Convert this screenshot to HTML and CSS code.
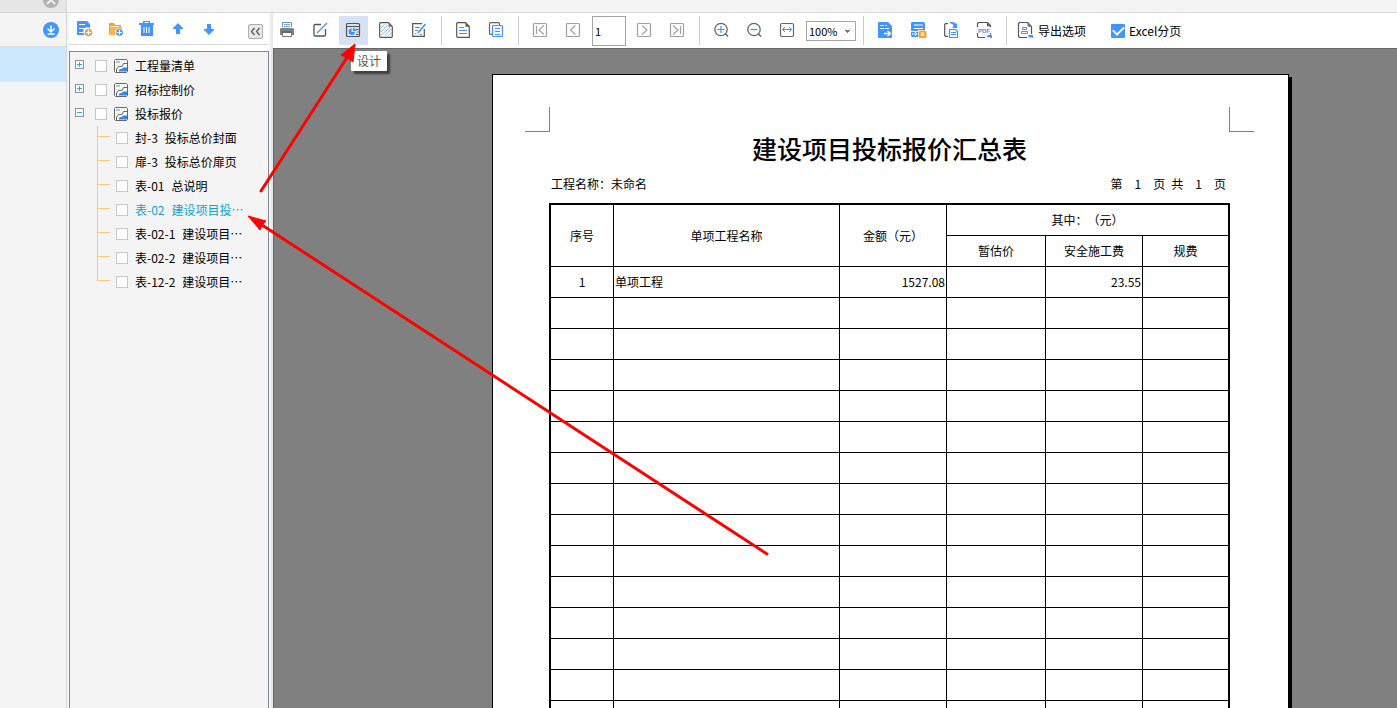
FILE: index.html
```html
<!DOCTYPE html>
<html lang="zh-CN">
<head>
<meta charset="utf-8">
<title>报表预览</title>
<link rel="stylesheet" href="styles.css">
</head>
<body>
<svg class="defs" width="0" height="0" aria-hidden="true">
  <symbol id="report" viewBox="0 0 14 14"><path d="M1.500 .5h11l1 1v11l-1 1h-11l-1-1v-11z" fill="#fafafa" stroke="#666"/><path d="M2 2h4v2H2z" fill="#9cc8fa"/><path d="M13.500 4.500h-4l-1.500 3H4.500L2.500 10v3" fill="none" stroke="#666"/><path d="M5 12.500V11l1-1h2l1-1.500h4v4z" fill="#2f87f5"/></symbol>
</svg>
<div class="app">
  <header class="tabs">
    <div class="tab">
      <button class="plain" aria-label="关闭"><svg width="16" height="8" viewBox="0 8 16 8"><circle cx="8" cy="8" r="8" fill="#b3b3b3"/><path d="M4 4l8 8M12 4l-8 8" stroke="#fff" stroke-width="1.6"/></svg></button>
    </div>
  </header>
  <aside class="side">
    <div class="side-head">
      <button class="plain" aria-label="下载"><svg width="16" height="16" viewBox="0 0 16 16"><circle cx="8" cy="8" r="8" fill="#4196fb"/><path d="M8 3.500v6M4.500 6.500L8 10l3.500-3.500M4.500 12h7" stroke="#fff" stroke-width="1.500" fill="none"/></svg></button>
    </div>
    <div class="side-selected"></div>
  </aside>
  <section class="reports">
    <div class="tree-tools">
      <button class="tool" aria-label="新建报表"><svg width="17" height="17" viewBox="0 0 17 17"><path d="M2 1h9l3 3v4a4 4 0 0 0-5 7H2a1 1 0 0 1-1-1V2a1 1 0 0 1 1-1z" fill="#4196fb"/><path d="M3 4.500h6M3 8.500h7M3 12.500h4" stroke="#fff"/><circle cx="12.500" cy="12.500" r="3.800" fill="#f9a02b"/><path d="M12.500 10v5M10 12.500h5" stroke="#fff" stroke-width="1.200"/></svg></button>
      <button class="tool" aria-label="新建文件夹"><svg width="17" height="17" viewBox="0 0 17 17"><path d="M2 3h5l1 2h6v3a4.500 4.500 0 0 0-5 7H2z" fill="#f9a02b"/><path d="M4 7h11v2h-5l-2 2v4H2z" fill="#ffb545"/><path d="M3 6.500h9" stroke="#fff" stroke-width=".8"/><circle cx="12.500" cy="12.500" r="3.800" fill="#4196fb" stroke="#fff" stroke-width=".6"/><path d="M12.500 10v5M10 12.500h5" stroke="#fff" stroke-width="1.200"/></svg></button>
      <button class="tool" aria-label="删除"><svg width="17" height="17" viewBox="0 0 17 17"><path d="M5 1h7v2h4v2h-1v11H3V5H1V3h4z" fill="#4196fb"/><path d="M6.500 2.500h4" stroke="#fff"/><path d="M6 7v6M8.500 7v6M11 7v6" stroke="#fff"/></svg></button>
      <button class="tool" aria-label="上移"><svg width="17" height="17" viewBox="0 0 17 17"><path d="M9 3l5 5v1h-3v5H7V9H4V8z" fill="#4196fb"/></svg></button>
      <button class="tool" aria-label="下移"><svg width="17" height="17" viewBox="0 0 17 17"><path d="M9 15l5-5V9h-3V4H7v5H4v1z" fill="#4196fb"/></svg></button>
      <button class="collapse" aria-label="收起"><svg width="11" height="9" viewBox="0 0 11 9"><path d="M4.500 1L1.500 4.500l3 3.500M9.500 1l-3 3.500 3 3.500" fill="none" stroke="#555" stroke-width="1.200"/></svg></button>
    </div>
    <ul class="tree">
      <li class="row"><button class="twisty" aria-label="展开"><svg width="9" height="9"><path d="M2 4.500h5M4.500 2v5" stroke="#28b0e0"/></svg></button><label class="node"><input type="checkbox" class="box"><svg width="14" height="14"><use href="#report"/></svg><span>工程量清单</span></label></li>
      <li class="row"><button class="twisty" aria-label="展开"><svg width="9" height="9"><path d="M2 4.500h5M4.500 2v5" stroke="#28b0e0"/></svg></button><label class="node"><input type="checkbox" class="box"><svg width="14" height="14"><use href="#report"/></svg><span>招标控制价</span></label></li>
      <li><div class="row"><button class="twisty" aria-label="折叠"><svg width="9" height="9"><path d="M2 4.500h5" stroke="#28b0e0"/></svg></button><label class="node"><input type="checkbox" class="box"><svg width="14" height="14"><use href="#report"/></svg><span>投标报价</span></label></div>
        <ul class="children">
          <li><label class="leaf"><input type="checkbox" class="box"><span>封-3</span><span>投标总价封面</span></label></li>
          <li><label class="leaf"><input type="checkbox" class="box"><span>扉-3</span><span>投标总价扉页</span></label></li>
          <li><label class="leaf"><input type="checkbox" class="box"><span>表-01</span><span>总说明</span></label></li>
          <li class="current"><label class="leaf"><input type="checkbox" class="box"><span>表-02</span><span>建设项目投⋯</span></label></li>
          <li><label class="leaf"><input type="checkbox" class="box"><span>表-02-1</span><span>建设项目⋯</span></label></li>
          <li><label class="leaf"><input type="checkbox" class="box"><span>表-02-2</span><span>建设项目⋯</span></label></li>
          <li><label class="leaf"><input type="checkbox" class="box"><span>表-12-2</span><span>建设项目⋯</span></label></li>
        </ul>
      </li>
    </ul>
  </section>
  <main class="viewer">
    <div class="tools">
      <button class="tool" aria-label="打印"><svg width="17" height="17" viewBox="0 0 17 17"><path d="M3.500 5V.5h9V5" fill="#fff" stroke="#8b8b8b"/><path d="M5 2.500h6M5 4.500h6" stroke="#6aacf7"/><path d="M2 6h12l1 1v6H1V7z" fill="#808080"/><path d="M3.500 10.500h9v4h-9z" fill="#fff" stroke="#777"/><path d="M3 10h10" stroke="#555"/></svg></button>
      <button class="tool" aria-label="编辑"><svg width="17" height="17" viewBox="0 0 17 17"><path d="M9 2.500H3a1 1 0 0 0-1 1V13a1 1 0 0 0 1 1h9.500a1 1 0 0 0 1-1V7" fill="none" stroke="#555" stroke-width="1.300"/><path d="M5 11l10-10" stroke="#3d94f6" stroke-width="1.300"/></svg></button>
      <button class="tool active" aria-label="设计"><svg width="17" height="17" viewBox="0 0 17 17"><rect x="1.500" y="1.500" width="13" height="13" rx="1" fill="none" stroke="#555" stroke-width="1.200"/><path d="M2 4.500h12" stroke="#555"/><path d="M6.500 6.500a3.200 3.200 0 1 0 3.500 3.500H6.500z" fill="#3d94f6"/><path d="M8 6a3 3 0 0 1 3 3H8z" fill="#3d94f6"/><path d="M11 7.500h2.500M12 10h1.500M11 12.500h2.500" stroke="#555"/></svg></button>
      <button class="tool" aria-label="背景"><svg width="17" height="17" viewBox="0 0 17 17"><path d="M10.500 .7H2.700a1 1 0 0 0-1 1v12.600a1 1 0 0 0 1 1h10.600a1 1 0 0 0 1-1V4.500z" fill="none" stroke="#555" stroke-width="1.200"/><path d="M10.500 .7v4h4z" fill="#777"/><path d="M3 6l3.500-3.500M3 10l6.500-7M3 13.500l9-8.500M7 13.500l6-6.500M10.500 13.500l3-3" stroke="#6aacf7" stroke-width=".9"/></svg></button>
      <button class="tool" aria-label="批注"><svg width="17" height="17" viewBox="0 0 17 17"><path d="M11 1.700H1.700v12.600h11.600V7" fill="none" stroke="#555" stroke-width="1.200"/><path d="M7 11l7.500-9" stroke="#3d94f6" stroke-width="1.600"/><path d="M4 5.500h5M4 8.500h3M4 11.500h1.500M9 12.500h2" stroke="#3d94f6"/></svg></button>
      <span class="sep"></span>
      <button class="tool" aria-label="单页"><svg width="17" height="17" viewBox="0 0 17 17"><path d="M10.500 .7H2.700a1 1 0 0 0-1 1v12.600a1 1 0 0 0 1 1h11.600V4.500z" fill="none" stroke="#555" stroke-width="1.200"/><path d="M10.500 .7v4h4z" fill="#555"/><path d="M4 5.500h5M4 8.500h8M4 11.500h8" stroke="#3d94f6"/></svg></button>
      <button class="tool" aria-label="多页"><svg width="17" height="17" viewBox="0 0 17 17"><path d="M11.500 3V1.700a1 1 0 0 0-1-1h-8a1 1 0 0 0-1 1v9.600a1 1 0 0 0 1 1H4" fill="none" stroke="#666" stroke-width="1.200"/><rect x="4.500" y="3.500" width="10" height="11" rx="1" fill="#fff" stroke="#3d94f6" stroke-width="1.200"/><path d="M7 6.500h5M7 9.500h5M7 12.500h5" stroke="#3d94f6"/></svg></button>
      <span class="sep"></span>
      <button class="tool" aria-label="首页"><svg width="17" height="17" viewBox="0 0 17 17"><rect x="1.500" y="1.500" width="13" height="13" rx="1" fill="none" stroke="#a0a0a0" stroke-width="1.200"/><path d="M4.500 4v8M12 3.500L7 8l5 4.500" fill="none" stroke="#a0a0a0" stroke-width="1.200"/></svg></button>
      <button class="tool" aria-label="上一页"><svg width="17" height="17" viewBox="0 0 17 17"><rect x="1.500" y="1.500" width="13" height="13" rx="1" fill="none" stroke="#a0a0a0" stroke-width="1.200"/><path d="M10.500 3.500L5.500 8l5 4.500" fill="none" stroke="#a0a0a0" stroke-width="1.200"/></svg></button>
      <input class="page-no" type="text" value="1" aria-label="页码">
      <button class="tool" aria-label="下一页"><svg width="17" height="17" viewBox="0 0 17 17"><rect x="1.500" y="1.500" width="13" height="13" rx="1" fill="none" stroke="#a0a0a0" stroke-width="1.200"/><path d="M6 3.500L11 8l-5 4.500" fill="none" stroke="#a0a0a0" stroke-width="1.200"/></svg></button>
      <button class="tool" aria-label="末页"><svg width="17" height="17" viewBox="0 0 17 17"><rect x="1.500" y="1.500" width="13" height="13" rx="1" fill="none" stroke="#a0a0a0" stroke-width="1.200"/><path d="M11.500 4v8M4 3.500L9 8l-5 4.500" fill="none" stroke="#a0a0a0" stroke-width="1.200"/></svg></button>
      <span class="sep"></span>
      <button class="tool" aria-label="放大"><svg width="17" height="17" viewBox="0 0 17 17"><circle cx="8" cy="7.500" r="6.200" fill="none" stroke="#666" stroke-width="1.300"/><path d="M12 11.500l3 3" stroke="#666" stroke-width="1.600"/><path d="M4.500 7.500h7M8 4v7" stroke="#3d94f6" stroke-width="1.200"/></svg></button>
      <button class="tool" aria-label="缩小"><svg width="17" height="17" viewBox="0 0 17 17"><circle cx="8" cy="7.500" r="6.200" fill="none" stroke="#666" stroke-width="1.300"/><path d="M12 11.500l3 3" stroke="#666" stroke-width="1.600"/><path d="M4.500 7.500h7" stroke="#3d94f6" stroke-width="1.200"/></svg></button>
      <button class="tool" aria-label="适合宽度"><svg width="17" height="17" viewBox="0 0 17 17"><rect x="1.500" y="1.500" width="13" height="13" rx="1.500" fill="none" stroke="#666" stroke-width="1.200"/><path d="M3.500 7.500h9M6 5L3.500 7.500 6 10M10 5l2.500 2.500L10 10" fill="none" stroke="#3d94f6"/></svg></button>
      <select class="zoom" aria-label="缩放"><option>100%</option></select>
      <span class="sep"></span>
      <button class="tool" aria-label="导出"><svg width="17" height="17" viewBox="0 0 17 17"><path d="M2 0h9l4 4v12H2a1 1 0 0 1-1-1V1a1 1 0 0 1 1-1z" fill="#4196fb"/><path d="M3 3.500h4M8 3.500h2M3 6.500h4M8 6.500h4" fill="none" stroke="#fff"/><path d="M7 11.500h6M10.500 9l3 2.500-3 2.500" fill="none" stroke="#fff" stroke-width="1.500"/></svg></button>
      <button class="tool" aria-label="导出Excel"><svg width="17" height="17" viewBox="0 0 17 17"><path d="M2 0h12l1 1v7H8v7H2l-1-1V1z" fill="#4196fb"/><path d="M4 3h9M4 6.500h9M1 9.500h7" stroke="#fff"/><path d="M2 12h5M5 10l2 2-2 2" stroke="#fff" fill="none"/><rect x="8.500" y="8.500" width="8" height="7.500" rx="1.500" fill="#f9a02b"/><path d="M11 10.500l3 3.500M14 10.500L11 14" stroke="#fff" stroke-width="1.200"/></svg></button>
      <button class="tool" aria-label="批量导出"><svg width="17" height="17" viewBox="0 0 17 17"><path d="M5 1.700H2.500l-.8.800v11l.8.800H5" fill="none" stroke="#555" stroke-width="1.200"/><path d="M7 0c3 0 5 0 6 2l1-1v5H9l1.500-1.500C10 2 9 1.500 7 1.500z" fill="#4196fb"/><path d="M6.500 7.500h6l2 2v6h-8z" fill="#fff" stroke="#4196fb" stroke-width="1.200"/><path d="M8 10.500h5M8 12.500h5" stroke="#4196fb"/></svg></button>
      <button class="tool" aria-label="导出PDF"><svg width="17" height="17" viewBox="0 0 17 17"><path d="M1.500 14.500V1.500l1-1h9l3 3v9M1.500 14.500l1 1H9" fill="none" stroke="#555" stroke-width="1.200"/><path d="M11 .7v3.500h3.500z" fill="#555"/><path d="M1 5h15v6H1z" fill="#fff"/><text x="2" y="10.500" class="pdf">PDF</text><path d="M10 14.500l2-.5-1-1h5v3z" fill="#3d94f6"/></svg></button>
      <span class="sep"></span>
      <button class="options"><svg width="17" height="17" viewBox="0 0 17 17"><path d="M10.500 .5h-8l-1 1v13l1 1H10M14.500 12V4.500l-4-4" fill="none" stroke="#555" stroke-width="1.200"/><path d="M10.500 .7v4h4z" fill="#777"/><path d="M5.500 5.500h4v2h-4zM4.500 9.500h6v2h-6z" fill="none" stroke="#3d94f6"/><path d="M10 14.500l2-.5-1-1h5v3z" fill="#3d94f6"/></svg><span>导出选项</span></button>
      <label class="paging"><input type="checkbox" class="tick" checked><span>Excel分页</span></label>
    </div>
    <div class="canvas">
      <article class="sheet">
        <div class="crops"><span class="crop crop-left"></span><span class="crop crop-right"></span></div>
        <h1>建设项目投标报价汇总表</h1>
        <div class="info">
          <span>工程名称：未命名</span>
          <span class="pages"><span class="count"><span>第</span><span>1</span><span>页</span></span><span class="count"><span>共</span><span>1</span><span>页</span></span></span>
        </div>
        <table class="summary">
          <colgroup><col class="c-no"><col class="c-name"><col class="c-sum"><col class="c-est"><col class="c-safe"><col></colgroup>
          <thead>
            <tr><th rowspan="2">序号</th><th rowspan="2">单项工程名称</th><th rowspan="2">金额（元）</th><th colspan="3">其中：（元）</th></tr>
            <tr><th>暂估价</th><th>安全施工费</th><th>规费</th></tr>
          </thead>
          <tbody>
            <tr><td class="mid">1</td><td>单项工程</td><td class="num">1527.08</td><td></td><td class="num">23.55</td><td></td></tr>
            <tr><td></td><td></td><td></td><td></td><td></td><td></td></tr>
            <tr><td></td><td></td><td></td><td></td><td></td><td></td></tr>
            <tr><td></td><td></td><td></td><td></td><td></td><td></td></tr>
            <tr><td></td><td></td><td></td><td></td><td></td><td></td></tr>
            <tr><td></td><td></td><td></td><td></td><td></td><td></td></tr>
            <tr><td></td><td></td><td></td><td></td><td></td><td></td></tr>
            <tr><td></td><td></td><td></td><td></td><td></td><td></td></tr>
            <tr><td></td><td></td><td></td><td></td><td></td><td></td></tr>
            <tr><td></td><td></td><td></td><td></td><td></td><td></td></tr>
            <tr><td></td><td></td><td></td><td></td><td></td><td></td></tr>
            <tr><td></td><td></td><td></td><td></td><td></td><td></td></tr>
            <tr><td></td><td></td><td></td><td></td><td></td><td></td></tr>
            <tr><td></td><td></td><td></td><td></td><td></td><td></td></tr>
            <tr><td></td><td></td><td></td><td></td><td></td><td></td></tr>
            <tr><td></td><td></td><td></td><td></td><td></td><td></td></tr>
          </tbody>
        </table>
      </article>
    </div>
  </main>
  <div class="tooltip" role="tooltip">设计</div>
  <svg class="arrows" width="780" height="570" viewBox="0 0 780 570" aria-hidden="true">
    <path d="M261 191L348 56M767 554L262 225" stroke="#f00" stroke-width="3" stroke-linecap="round"/>
    <path d="M355 44l-14 11 6 3 6 4zM248 216l18 5-4 4-2 5z" fill="#f00" stroke="#f00"/>
  </svg>
</div>
</body>
</html>
```

FILE: styles.css
```css
* { box-sizing: border-box; }

body {
  margin: 0;
  font: 12px/20px "Noto Sans CJK SC", sans-serif;
  text-spacing-trim: space-all;
  color: #000;
  background: #f4f4f4;
}

button, input, select { font: inherit; color: inherit; margin: 0; }
button { padding: 0; border: 0; background: none; }
svg { display: block; flex: none; }
ul { list-style: none; margin: 0; padding: 0; }
.defs { position: absolute; }
.pdf { font: bold 6px "Liberation Sans", sans-serif; fill: #3d94f6; }

.app {
  position: relative;
  display: grid;
  grid-template-columns: 67px 202px 1fr;
  grid-template-rows: 13px minmax(0, 1fr);
  height: 100vh;
  overflow: hidden;
}

/* tab strip and far left list */
.tabs { grid-column: 1 / -1; border-bottom: 1px solid #d9d9d9; }
.tab {
  display: flex;
  justify-content: flex-end;
  align-items: flex-start;
  width: 67px;
  height: 12px;
  padding-right: 7px;
  background: #e6e6e6;
  border-right: 1px solid #d9d9d9;
}
.side { border-right: 1px solid #d9d9d9; }
.side-head {
  display: flex;
  justify-content: flex-end;
  align-items: center;
  height: 34px;
  padding-right: 7px;
  border-bottom: 1px solid #d9d9d9;
}
.side-selected { height: 35px; background: #cce8ff; }

/* report tree */
.reports {
  display: flex;
  flex-direction: column;
  margin-left: 2px;
  background: #fff;
}
.tree-tools {
  display: flex;
  align-items: center;
  gap: 2px;
  height: 32px;
  padding-left: 1px;
  border-bottom: 1px solid #d9d9d9;
}
.tool {
  display: flex;
  flex: none;
  justify-content: center;
  align-items: center;
  width: 29px;
  height: 29px;
}
.tool.active { background: #d6e2f3; }
.collapse {
  display: flex;
  justify-content: center;
  align-items: center;
  align-self: flex-end;
  width: 15px;
  height: 15px;
  margin: 0 6px 5px auto;
  background: #e8e8e8;
  border: 1px solid #adadad;
  border-radius: 2px;
}
.tree {
  flex: 1;
  margin-top: 6px;
  padding-top: 2px;
  background: #f4f4f4;
  border: 1px solid #828790;
  border-bottom: 0;
  white-space: nowrap;
}
.row { display: flex; align-items: center; gap: 11px; height: 24px; padding-left: 5px; }
.twisty { width: 9px; height: 9px; margin-bottom: 3px; background: #fff; outline: 1px solid #919191; outline-offset: -1px; }
.node { display: flex; align-items: center; gap: 7px; }
.box {
  appearance: none;
  flex: none;
  width: 12px;
  height: 12px;
  background: #fff;
  border: 1px solid #c6c6c6;
}
.children { margin-left: 27px; }
.children li { display: flex; gap: 6px; height: 24px; }
.children li::before {
  content: "";
  width: 13px;
  background:
    linear-gradient(#ffca7a, #ffca7a) 0 0 / 1px 100% no-repeat,
    linear-gradient(#ffca7a, #ffca7a) 0 10px / 13px 1px no-repeat;
}
.children li:last-child::before { background-size: 1px 11px, 13px 1px; }
.leaf { display: flex; align-items: center; gap: 7px; }
.current { color: #0aa3d8; }

/* preview */
.viewer {
  display: flex;
  flex-direction: column;
  min-width: 0;
  margin-left: 2px;
  border-left: 2px solid #e8e8e8;
}
.tools {
  display: flex;
  flex: none;
  align-items: center;
  gap: 4px;
  height: 35px;
  background: #fff;
  white-space: nowrap;
}
.sep { flex: none; width: 1px; height: 29px; margin: 0 3px; background: #ccc; }
.page-no {
  width: 34px;
  height: 30px;
  padding: 0 2px;
  font-size: 11px;
  background: #fff;
  border: 1px solid #a5a5a5;
}
.zoom {
  appearance: none;
  width: 50px;
  height: 20px;
  padding: 0 2px;
  font-size: 11px;
  line-height: 18px;
  border: 1px solid #a5a5a5;
  border-radius: 0;
  background:
    linear-gradient(#777, #777) 38px 8px / 5px 1px no-repeat,
    linear-gradient(#777, #777) 39px 9px / 3px 1px no-repeat,
    linear-gradient(#777, #777) 40px 10px / 1px 1px no-repeat,
    #fff;
}
.options { display: flex; align-items: center; gap: 4px; padding-left: 3px; }
.paging { display: flex; align-items: center; gap: 4px; margin-left: 21px; }
.tick {
  appearance: none;
  display: grid;
  place-items: center;
  width: 14px;
  height: 14px;
  background: #4196fb;
  border-radius: 1px;
}
.tick::before {
  content: "";
  width: 9px;
  height: 5px;
  margin-bottom: 3px;
  border: solid #fff;
  border-width: 0 0 2px 2px;
  transform: rotate(-45deg);
}
.canvas {
  flex: 1;
  min-height: 0;
  padding: 25px 0 0 218px;
  overflow: hidden;
  background: #808080;
  border: solid #666;
  border-width: 1px 0 0 1px;
}

/* printed sheet */
.sheet {
  width: 797px;
  padding: 32px 58px 40px 56px;
  background: #fff;
  border: 1px solid #000;
  box-shadow: 3px 3px 0 #000;
}
.crops { display: flex; justify-content: space-between; margin: 0 -24px; }
.crop { width: 25px; height: 25px; border: 0 solid #808080; border-bottom-width: 1px; }
.crop-left { border-right-width: 1px; }
.crop-right { border-left-width: 1px; }
.sheet h1 {
  margin: 1px 0 11px;
  font-size: 25px;
  font-weight: 500;
  line-height: 30px;
  text-align: center;
}
.info { display: flex; justify-content: space-between; padding: 0 4px 0 2px; }
.pages { display: flex; gap: 6px; }
.count { display: flex; gap: 12px; }
.summary {
  width: 100%;
  margin-top: 9px;
  table-layout: fixed;
  border: 2px solid #000;
  border-spacing: 0;
}
.c-no { width: 63px; }
.c-name { width: 226px; }
.c-sum { width: 107px; }
.c-est { width: 99px; }
.c-safe { width: 97px; }
.summary th, .summary td {
  height: 31px;
  padding: 0 1px;
  font-weight: 400;
  border: solid #000;
  border-width: 0 1px 1px 0;
}
.summary tr > :last-child { border-right: 0; }
.summary td { text-align: left; }
.summary .mid { text-align: center; }
.summary .num { text-align: right; }

/* layers over the preview */
.tooltip {
  position: absolute;
  top: 51px;
  left: 351px;
  padding: 0 6px;
  color: #555;
  background: #fff;
  border-radius: 1px;
  box-shadow: 3px 3px 2px rgba(0, 0, 0, .5);
}
.arrows { position: absolute; top: 0; left: 0; pointer-events: none; }
```
